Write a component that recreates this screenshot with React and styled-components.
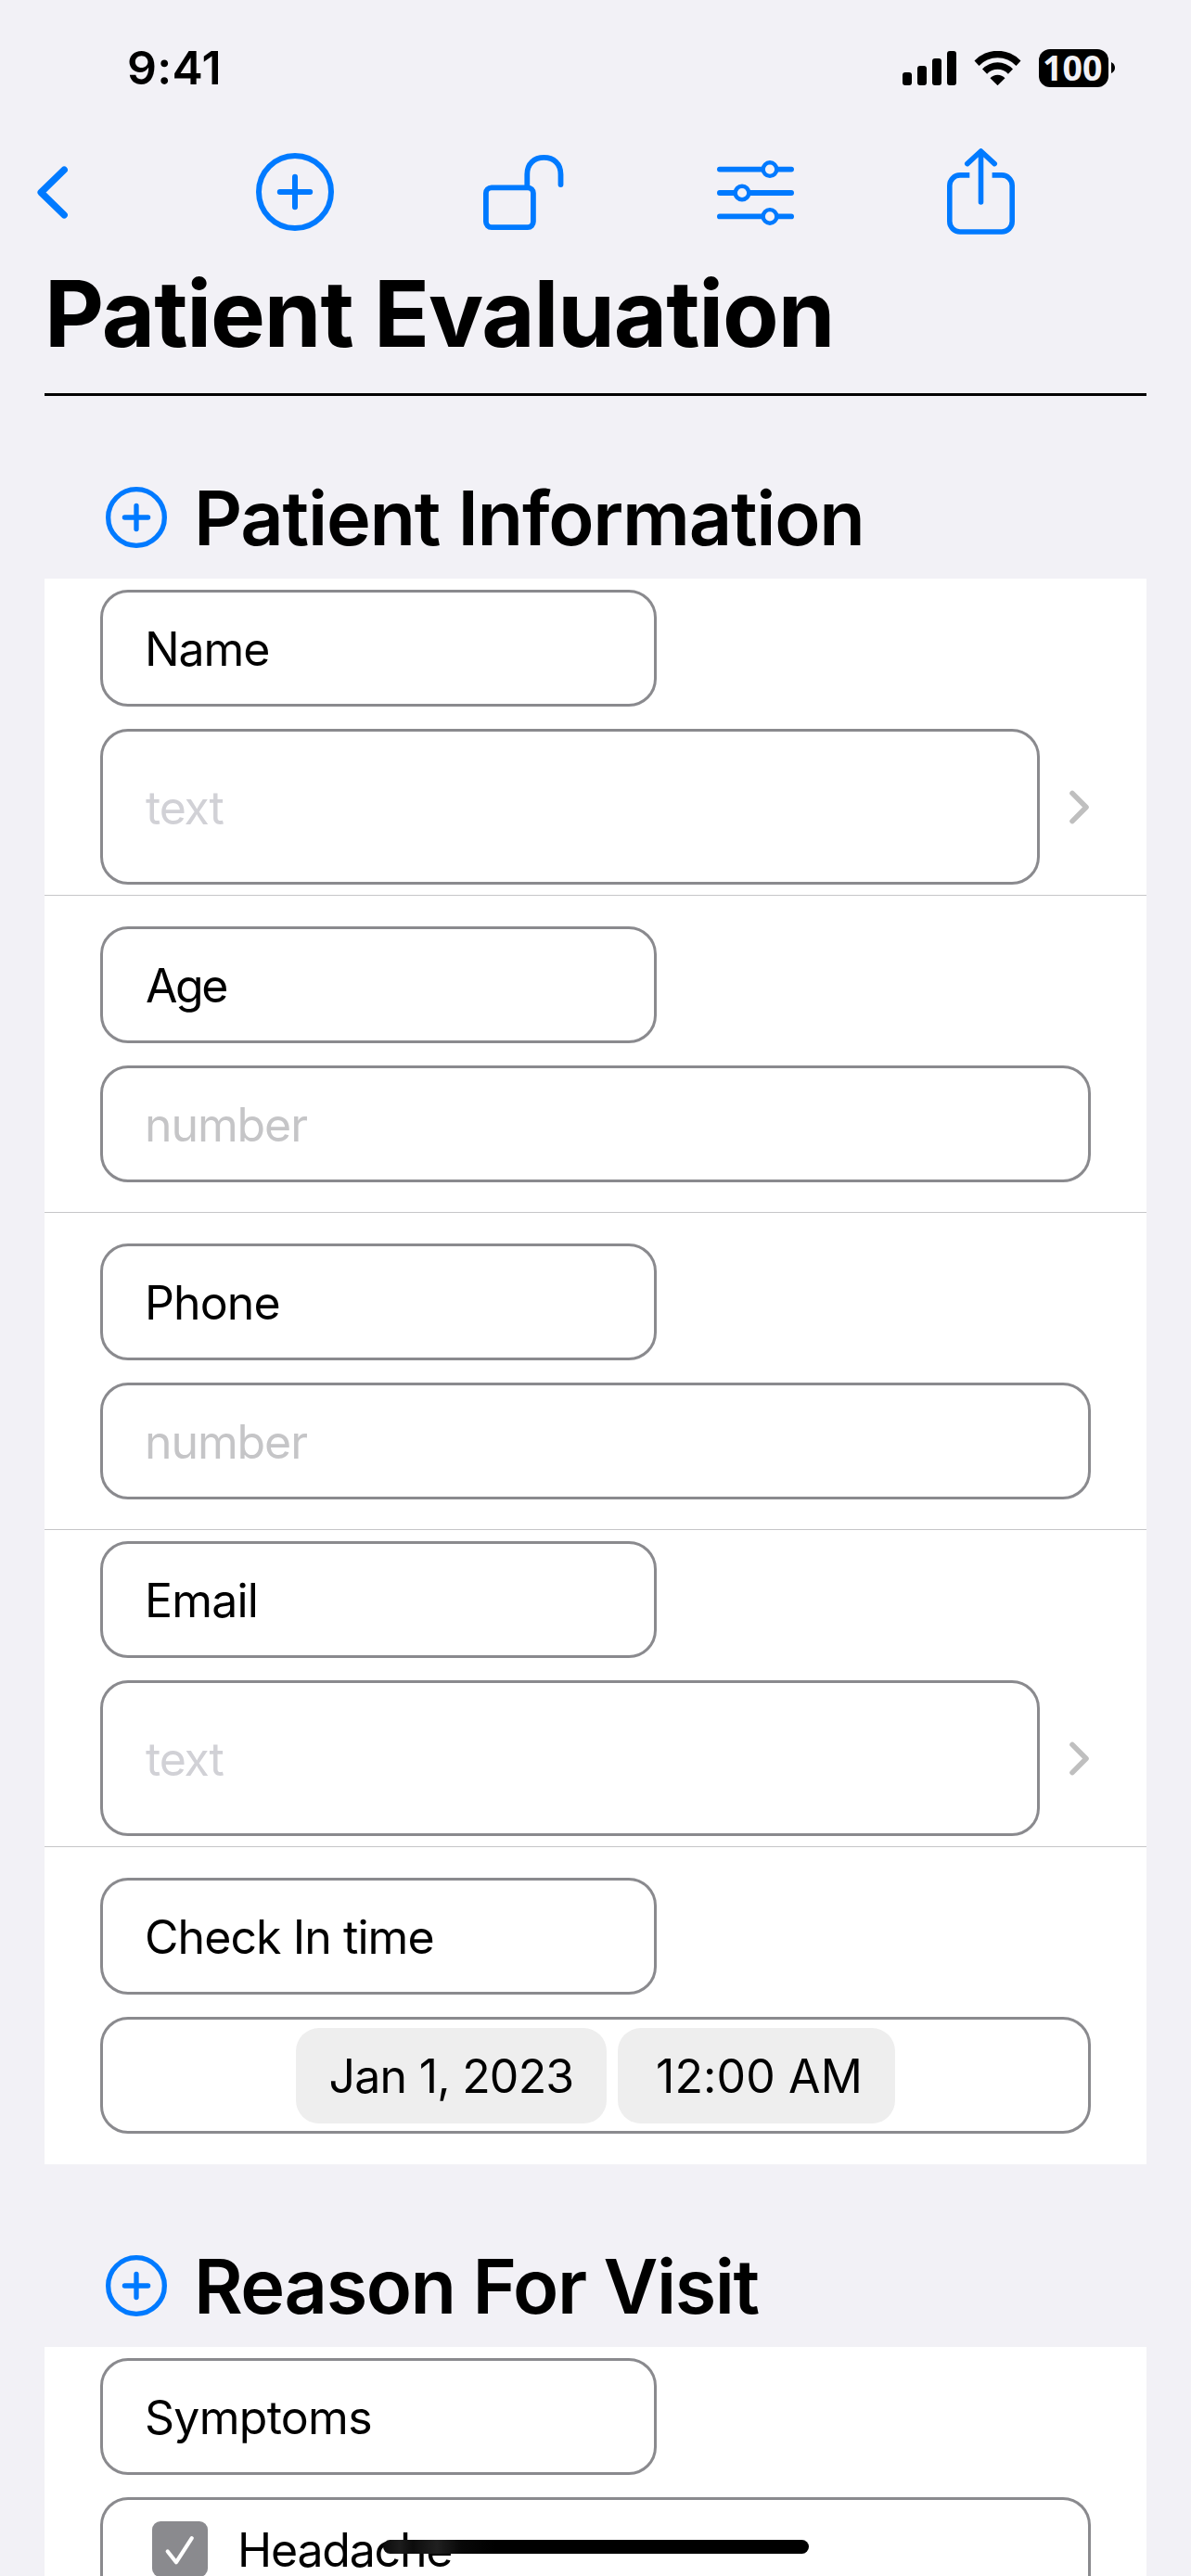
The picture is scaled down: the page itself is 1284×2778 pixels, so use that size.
import React from "react";
import styled, { createGlobalStyle } from "styled-components";

const color = {
  page: "#f2f1f6",
  card: "#ffffff",
  ink: "#000000",
  accent: "#007aff",
  outline: "#8a8a8e",
  separator: "#c6c6c8",
  chevron: "#bfbfbf",
  chip: "#eeeeee",
};

const GlobalStyle = createGlobalStyle`
  *, *::before, *::after { box-sizing: border-box; }
  body {
    margin: 0;
    background: ${color.page};
    color: ${color.ink};
    font-family: Inter, "Liberation Sans", sans-serif;
  }
  h1, h2 { margin: 0; }
  svg { display: block; flex: none; }
`;

const Screen = styled.main`
  position: relative;
  display: flex;
  flex-direction: column;
  width: 1284px;
  height: 2778px;
  overflow: hidden;
  background: ${color.page};
`;

const StatusBar = styled.header`
  display: flex;
  align-items: center;
  flex: none;
  height: 146px;
  padding: 0 82px 0 137px;
`;

const Clock = styled.time`
  font-size: 50px;
  font-weight: 600;
  line-height: 60px;
  letter-spacing: 0.3px;
`;

const StatusIcons = styled.div`
  display: flex;
  align-items: center;
  gap: 19px;
  margin-left: auto;
`;

const Battery = styled.div`
  display: flex;
  align-items: center;
  gap: 3px;
`;

const BatteryBody = styled.div`
  width: 75px;
  height: 41px;
  padding-left: 4px;
  border-radius: 12px;
  background: ${color.ink};
  color: ${color.page};
  font-family: "Noto Sans", "Open Sans", sans-serif;
  font-size: 37.5px;
  font-weight: 700;
  line-height: 39px;
`;

const Toolbar = styled.nav`
  display: grid;
  grid-template-columns: 236px 245px 252px 248px 73px;
  align-items: center;
  flex: none;
  height: 122px;
  padding-left: 40px;
`;

const ToolButton = styled.button`
  display: flex;
  justify-self: start;
  padding: 0;
  margin-top: ${(p) => p.$drop || 0}px;
  border: 0;
  background: none;
  color: ${color.accent};
`;

const TitleBar = styled.div`
  display: flex;
  flex: none;
  height: 159px;
  margin: 0 48px;
  padding-top: 10px;
  border-bottom: 3px solid ${color.ink};
`;

const Title = styled.h1`
  font-size: 99px;
  font-weight: 700;
  line-height: 120px;
  letter-spacing: -1.11px;
  white-space: nowrap;
`;

const SectionHeader = styled.div`
  display: flex;
  align-items: center;
  flex: none;
  gap: 29px;
  height: 197px;
  padding: 65px 0 0 114px;
  color: ${color.accent};
`;

const SectionTitle = styled.h2`
  padding-top: 1px;
  color: ${color.ink};
  font-size: 81px;
  font-weight: 600;
  line-height: 98px;
  letter-spacing: ${(p) => p.$tracking}px;
  white-space: nowrap;
`;

const Card = styled.section`
  flex: none;
  margin: 0 48px;
  background: ${color.card};
`;

const Row = styled.div`
  display: flex;
  flex-direction: column;
  justify-content: ${(p) => (p.$open ? "flex-start" : "center")};
  gap: 24px;
  height: ${(p) => (p.$open ? 247 : 342)}px;
  padding: ${(p) => (p.$open ? "12px 60px 0" : "0 60px")};
  box-shadow: ${(p) => (p.$last ? "none" : `inset 0 -1px ${color.separator}`)};
`;

const Box = styled.div`
  display: flex;
  align-items: center;
  flex: none;
  height: 126px;
  border: 3px solid ${color.outline};
  border-radius: 30px;
  font-size: 50px;
  line-height: 60px;
  white-space: nowrap;
`;

const Label = styled(Box)`
  width: 600px;
  padding: 2px 0 0 ${(p) => p.$inset || 45}px;
  letter-spacing: ${(p) => p.$tracking}px;
`;

const NumberField = styled(Box)`
  padding: 2px 0 0 45px;
  color: #c5c5c7;
  letter-spacing: -1.1px;
`;

const TextLine = styled.div`
  display: flex;
  align-items: center;
  gap: 32px;
`;

const TextField = styled(Box)`
  width: 1013px;
  height: 168px;
  padding: 1px 0 0 46px;
  color: #d1d1d6;
  letter-spacing: -1.2px;
`;

const DateField = styled(Box)`
  justify-content: center;
  gap: 12px;
`;

const Chip = styled.span`
  display: flex;
  align-items: center;
  justify-content: center;
  width: ${(p) => p.$width}px;
  height: 103px;
  padding: 1px 0 0 ${(p) => p.$shift || 0}px;
  border-radius: 25px;
  background: ${color.chip};
  letter-spacing: ${(p) => p.$tracking}px;
`;

const ChoiceList = styled(Box)`
  align-items: flex-start;
  height: 85px;
  padding: 23px 0 0 53px;
  border-bottom: 0;
  border-radius: 30px 30px 0 0;
`;

const Choice = styled.div`
  display: flex;
  align-items: center;
  gap: 32px;
  line-height: 54px;
  letter-spacing: -1.2px;
`;

const ChoiceText = styled.span`
  padding-top: 2px;
`;

const CheckBox = styled.span`
  display: flex;
  width: 60px;
  height: 60px;
  border-radius: 9px;
  background: ${color.outline};
  color: #ffffff;
`;

const HomeIndicator = styled.div`
  position: absolute;
  left: 413px;
  bottom: 24px;
  width: 459px;
  height: 15px;
  border-radius: 7.5px;
  background: linear-gradient(90deg, #0c0c0c 0, #1c1c1c 18px, #0c0c0c 32px, #202020 58px, #080808 84px, #000 120px);
`;

function SignalIcon() {
  return (
    <svg width="58" height="37" viewBox="0 0 58 37" fill="currentColor">
      <rect x="0" y="23" width="10" height="14" rx="3" />
      <rect x="16" y="16" width="10" height="21" rx="3" />
      <rect x="32" y="8" width="10" height="29" rx="3" />
      <rect x="48" y="0" width="10" height="37" rx="3" />
    </svg>
  );
}

function WifiIcon() {
  return (
    <svg width="51" height="37" viewBox="-0.5 0 51 37" fill="currentColor">
      <path d="M0 10.5A34.5 34.5 0 0 1 50 10.5L45 16A27.5 27.5 0 0 0 5 16Z" />
      <path d="M8.5 19.5A22.5 22.5 0 0 1 41.5 19.5L36.4 24.8A15.5 15.5 0 0 0 13.6 24.8Z" />
      <path d="M17 29.3A10.6 10.6 0 0 1 33 29.3L25 37.2Z" />
    </svg>
  );
}

function BatteryTip() {
  return (
    <svg width="4" height="12" viewBox="0 0 4 12">
      <path d="M0 0Q4 2 4 6T0 12Z" fill="currentColor" />
    </svg>
  );
}

function BackIcon() {
  return (
    <svg width="33" height="57" viewBox="0 0 33 57" fill="none" stroke="currentColor" strokeWidth="7.4" strokeLinecap="round" strokeLinejoin="round">
      <path d="M29.2 4.2L4.2 28.5L29.2 52.8" />
    </svg>
  );
}

function PlusCircle({ size, stroke, arm }) {
  const c = size / 2;
  return (
    <svg width={size} height={size} viewBox={`0 0 ${size} ${size}`} fill="none" stroke="currentColor" strokeWidth={stroke} strokeLinecap="round">
      <circle cx={c} cy={c} r={c - stroke / 2} />
      <path d={`M${c - arm} ${c}H${c + arm}M${c} ${c - arm}V${c + arm}`} />
    </svg>
  );
}

function UnlockIcon() {
  return (
    <svg width="87" height="82" viewBox="0 0 87 82" fill="none" stroke="currentColor" strokeWidth="5.8" strokeLinecap="round">
      <rect x="2.9" y="35.3" width="51" height="42.8" rx="6" />
      <path d="M47.3 35V21C47.3 9.2 55 2.9 65.4 2.9S83.5 9.2 83.5 21V32" />
    </svg>
  );
}

function SlidersIcon() {
  return (
    <svg width="83" height="70" viewBox="0 0 83 70" stroke="currentColor" strokeLinecap="round">
      <path d="M2.9 9.6H80.1M2.9 35H80.1M2.9 60.4H80.1" strokeWidth="5.8" />
      <g fill={color.page} strokeWidth="4.4">
        <circle cx="57" cy="9.6" r="7.3" />
        <circle cx="27" cy="35" r="7.3" />
        <circle cx="57" cy="60.4" r="7.3" />
      </g>
    </svg>
  );
}

function ShareIcon() {
  return (
    <svg width="73" height="94" viewBox="0 0 73 94" fill="none" stroke="currentColor" strokeWidth="5.6">
      <path d="M24.3 28.9H14A11.2 11.2 0 0 0 2.8 40.1V78.8A11.2 11.2 0 0 0 14 90H59A11.2 11.2 0 0 0 70.2 78.8V40.1A11.2 11.2 0 0 0 59 28.9H48.6" />
      <path d="M36.5 4V58M21.8 16.6L36.5 3L51.2 16.6" strokeLinecap="round" strokeLinejoin="round" />
    </svg>
  );
}

function DisclosureIcon() {
  return (
    <svg width="21" height="37" viewBox="0 0 21 37" fill="none" stroke={color.chevron} strokeWidth="5.6" strokeLinecap="round" strokeLinejoin="round">
      <path d="M3 3.4L18 18.5L3 33.6" />
    </svg>
  );
}

function CheckIcon() {
  return (
    <svg width="60" height="60" viewBox="0 0 60 60" fill="none" stroke="currentColor" strokeWidth="4.2" strokeLinecap="round" strokeLinejoin="round">
      <path d="M16.7 32.5L26 44.2L42.8 18.2" />
    </svg>
  );
}

function Section({ title, tracking, children }) {
  return (
    <>
      <SectionHeader>
        <PlusCircle size={66} stroke={5.3} arm={12.6} />
        <SectionTitle $tracking={tracking}>{title}</SectionTitle>
      </SectionHeader>
      <Card>{children}</Card>
    </>
  );
}

function TextRow({ label, tracking }) {
  return (
    <Row>
      <Label $tracking={tracking}>{label}</Label>
      <TextLine>
        <TextField>text</TextField>
        <DisclosureIcon />
      </TextLine>
    </Row>
  );
}

function NumberRow({ label, tracking, inset }) {
  return (
    <Row>
      <Label $tracking={tracking} $inset={inset}>{label}</Label>
      <NumberField>number</NumberField>
    </Row>
  );
}

export default function App() {
  return (
    <Screen>
      <GlobalStyle />
      <StatusBar>
        <Clock>9:41</Clock>
        <StatusIcons>
          <SignalIcon />
          <WifiIcon />
          <Battery>
            <BatteryBody>100</BatteryBody>
            <BatteryTip />
          </Battery>
        </StatusIcons>
      </StatusBar>

      <Toolbar>
        <ToolButton aria-label="Back"><BackIcon /></ToolButton>
        <ToolButton aria-label="Add"><PlusCircle size={84} stroke={6} arm={16.2} /></ToolButton>
        <ToolButton aria-label="Unlock" $drop={2}><UnlockIcon /></ToolButton>
        <ToolButton aria-label="Options" $drop={2}><SlidersIcon /></ToolButton>
        <ToolButton aria-label="Share"><ShareIcon /></ToolButton>
      </Toolbar>

      <TitleBar>
        <Title>Patient Evaluation</Title>
      </TitleBar>

      <Section title="Patient Information" tracking={-1.24}>
        <TextRow label="Name" tracking={-1.1} />
        <NumberRow label="Age" tracking={-2.5} inset={46} />
        <NumberRow label="Phone" tracking={-0.9} />
        <TextRow label="Email" tracking={-0.8} />
        <Row $last>
          <Label $tracking={-0.93}>Check In time</Label>
          <DateField>
            <Chip $width={335} $tracking={-0.77}>Jan 1, 2023</Chip>
            <Chip $width={299} $tracking={0.1} $shift={6}>12:00 AM</Chip>
          </DateField>
        </Row>
      </Section>

      <Section title="Reason For Visit" tracking={-1.46}>
        <Row $last $open>
          <Label $tracking={-0.73}>Symptoms</Label>
          <ChoiceList>
            <Choice>
              <CheckBox><CheckIcon /></CheckBox>
              <ChoiceText>Headache</ChoiceText>
            </Choice>
          </ChoiceList>
        </Row>
      </Section>

      <HomeIndicator />
    </Screen>
  );
}
